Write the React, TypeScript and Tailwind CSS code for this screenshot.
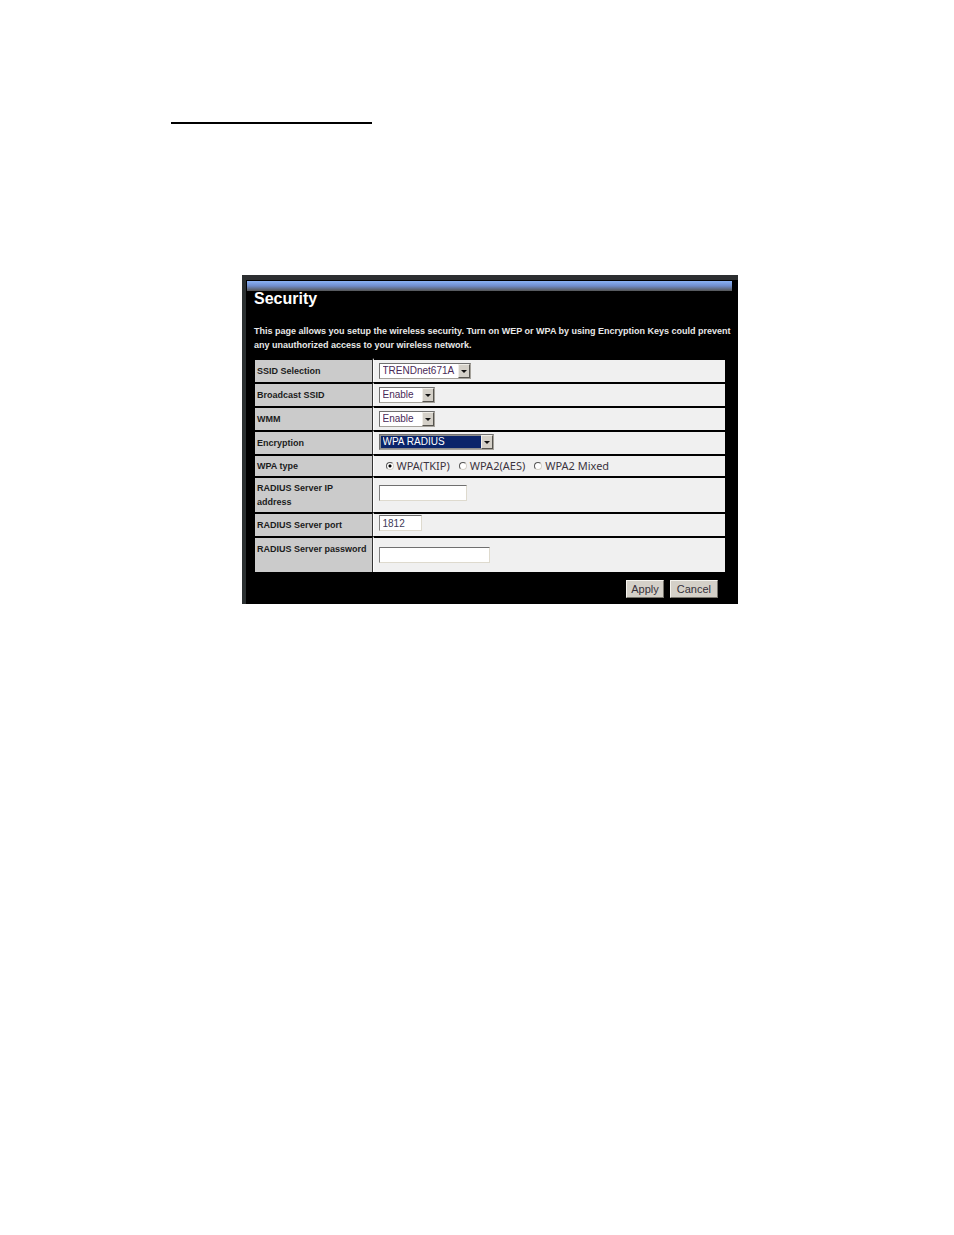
import type { ReactNode } from "react";
import { useState } from "react";

const SELECT_BASE =
  "col-start-1 row-start-1 h-4 w-full appearance-none border border-t-[#707070] border-l-[#707070] border-r-[#a5a29b] border-b-[#a5a29b] pl-[3px] text-[10px] leading-[14px] outline-none";

const INPUT_BASE =
  "block h-4 border border-t-[#6f6f6f] border-l-[#808080] border-r-[#dedace] border-b-[#dedace] bg-white px-[3px] text-[10px] leading-[14px] text-[#403a58] outline-none";

const BUTTON_BASE =
  "border border-t-[#f5f3ee] border-l-[#f5f3ee] border-r-[#77746c] border-b-[#77746c] bg-[#d4d0c8] text-[11px] leading-4 text-[#35303a]";

type SelectProps = {
  id: string;
  options: string[];
  className: string;
  active?: boolean;
};

const Select = ({ id, options, className, active }: SelectProps) => {
  const [value, setValue] = useState(options[0]);

  return (
    <div className={`grid ${className}`}>
      <select
        id={id}
        value={value}
        onChange={(e) => setValue(e.target.value)}
        className={`${SELECT_BASE} ${active ? "bg-[#0a246a] text-white ring-1 ring-inset ring-[#8d8d8d]" : "bg-white text-[#4a2a58]"}`}
      >
        {options.map((o) => (
          <option key={o}>{o}</option>
        ))}
      </select>
      <span className="pointer-events-none z-10 col-start-1 row-start-1 mr-px flex h-[14px] w-3 items-center justify-center self-center justify-self-end border border-t-[#f0eee8] border-l-[#f0eee8] border-r-[#55534e] border-b-[#55534e] bg-[#d4d0c8]">
        <svg viewBox="0 0 6 3" className="h-[3px] w-[6px]" aria-hidden="true">
          <path d="M0 0h6L3 3z" fill="#111" />
        </svg>
      </span>
    </div>
  );
};

type RowProps = {
  label: string;
  htmlFor?: string;
  height: string;
  labelClass?: string;
  cellClass?: string;
  children: ReactNode;
};

const Row = ({ label, htmlFor, height, labelClass = "align-middle", cellClass = "", children }: RowProps) => (
  <tr className={height}>
    <th
      scope="row"
      className={`border-t-2 border-r border-t-black border-r-[#333] bg-[#cbcbcb] px-[2px] text-left text-[9px] leading-[14px] font-bold text-[#1c1c1c] ${labelClass}`}
    >
      {htmlFor ? <label htmlFor={htmlFor}>{label}</label> : label}
    </th>
    <td className={`border-t-2 border-l border-t-black border-l-white bg-[#f0f0f0] pl-[5px] align-middle ${cellClass}`}>
      {children}
    </td>
  </tr>
);

const WPA_TYPES = ["WPA(TKIP)", "WPA2(AES)", "WPA2 Mixed"];

const SecurityPanel = () => {
  const [wpaType, setWpaType] = useState(WPA_TYPES[0]);

  return (
    <form
      onSubmit={(e) => e.preventDefault()}
      className="mx-auto w-full max-w-[496px] border-t-[5px] border-l-4 border-t-[#2c2e30] border-l-[#2b3031] bg-black pb-[6px] font-['Liberation_Sans',Arial,sans-serif]"
    >
      <div className="mt-px mr-[6px] ml-px h-[10px] bg-linear-to-b from-[#8ab2f6] via-[#6f8ccb] to-[#555555]" />
      <div className="pl-[8px]">
        <h1 className="text-[16px] leading-4 font-bold text-white">Security</h1>
        <p className="mt-[17px] text-[9px] leading-[14px] font-bold text-[#e8e8e8]">
          This page allows you setup the wireless security. Turn on WEP or WPA by using Encryption Keys could prevent
          any unauthorized access to your wireless network.
        </p>
      </div>

      <div className="pr-[13px] pl-[9px]">
        <table className="mt-[6px] w-full table-fixed border-separate border-spacing-0">
          <colgroup>
            <col className="w-[25%]" />
            <col />
          </colgroup>
          <tbody>
            <Row label="SSID Selection" htmlFor="ssid" height="h-6">
              <Select id="ssid" options={["TRENDnet671A"]} className="w-[92px]" />
            </Row>
            <Row label="Broadcast SSID" htmlFor="broadcast" height="h-6">
              <Select id="broadcast" options={["Enable", "Disable"]} className="w-14" />
            </Row>
            <Row label="WMM" htmlFor="wmm" height="h-6">
              <Select id="wmm" options={["Enable", "Disable"]} className="w-14" />
            </Row>
            <Row label="Encryption" htmlFor="encryption" height="h-6" cellClass="pb-[2px]">
              <Select id="encryption" options={["WPA RADIUS"]} className="w-[115px]" active />
            </Row>
            <Row label="WPA type" height="h-[22px]">
              <div className="flex gap-[9px] pl-[7px]" role="radiogroup" aria-label="WPA type">
                {WPA_TYPES.map((type) => (
                  <label
                    key={type}
                    className="flex items-center gap-[3px] font-['Noto_Sans',Tahoma,sans-serif] text-[11px] leading-4 text-[#3c3440]"
                  >
                    <input
                      type="radio"
                      name="wpa-type"
                      value={type}
                      checked={wpaType === type}
                      onChange={() => setWpaType(type)}
                      className="size-2 appearance-none rounded-full border border-t-[#555] border-l-[#555] border-r-[#d4d0c8] border-b-[#d4d0c8] bg-white checked:bg-[radial-gradient(circle,#000_1px,#fff_2px)]"
                    />
                    {type}
                  </label>
                ))}
              </div>
            </Row>
            <Row label="RADIUS Server IP address" htmlFor="radius-ip" height="h-9" cellClass="pb-1">
              <input id="radius-ip" type="text" className={`${INPUT_BASE} w-[88px]`} />
            </Row>
            <Row label="RADIUS Server port" htmlFor="radius-port" height="h-6" cellClass="pb-1">
              <input id="radius-port" type="text" defaultValue="1812" className={`${INPUT_BASE} w-[43px]`} />
            </Row>
            <Row label="RADIUS Server password" htmlFor="radius-password" height="h-9" labelClass="align-top pt-1">
              <input id="radius-password" type="password" className={`${INPUT_BASE} w-[111px]`} />
            </Row>
          </tbody>
        </table>

        <div className="mt-2 flex items-center justify-end gap-[6px] pr-[7px]">
          <button type="submit" className={`${BUTTON_BASE} px-1`}>
            Apply
          </button>
          <button type="button" className={`${BUTTON_BASE} px-[6px]`}>
            Cancel
          </button>
        </div>
      </div>
    </form>
  );
};

const App = () => {
  return (
    <main className="min-h-screen bg-white pt-[122px] pr-[145px] pb-16 pl-[171px]">
      <hr className="mb-[151px] w-[201px] border-t-2 border-black" />
      <SecurityPanel />
    </main>
  );
};

export default App;
